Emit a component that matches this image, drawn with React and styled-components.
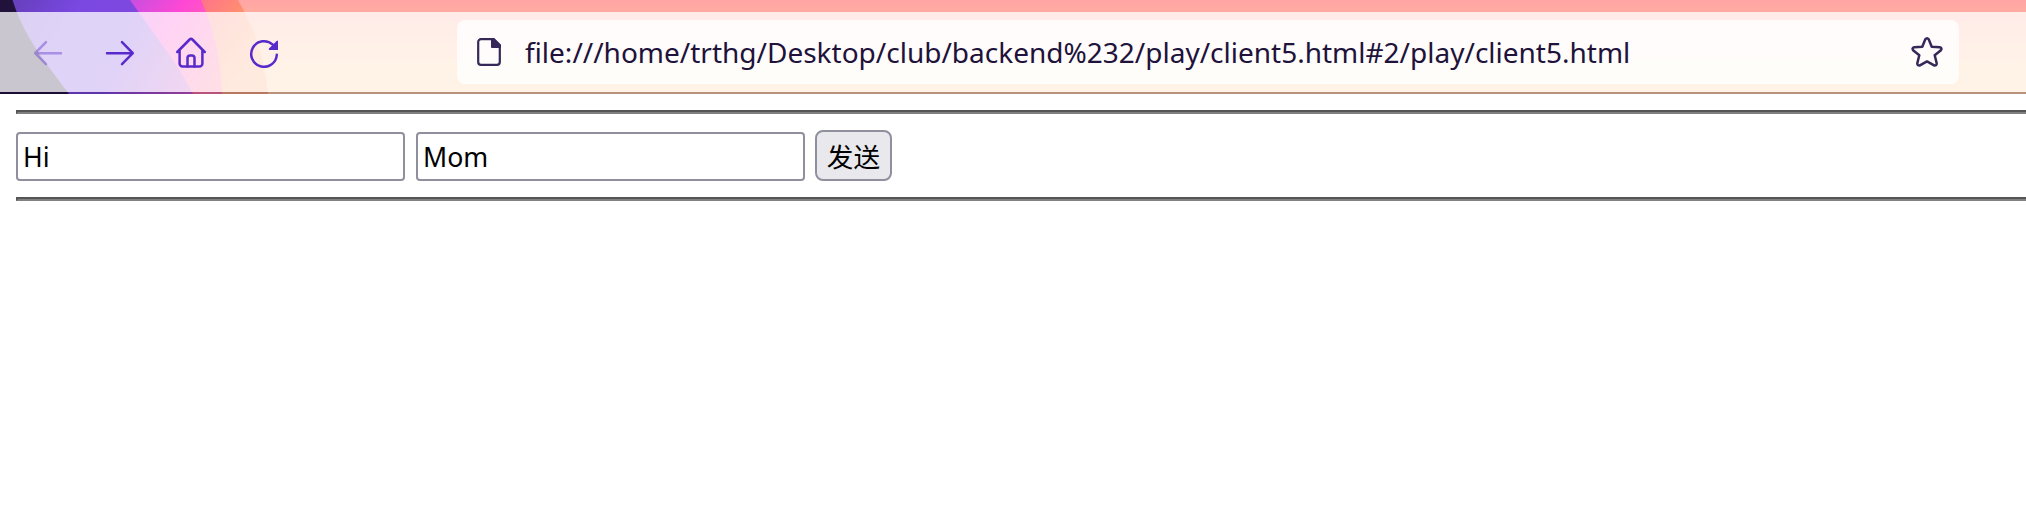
import React from "react";
import styled, { createGlobalStyle } from "styled-components";

const GlobalStyle = createGlobalStyle`
  * { box-sizing: border-box; }
  body { margin: 0; background: #fff; overflow: hidden; font-family: "Noto Sans", "Noto Sans CJK SC", sans-serif; }
`;

const Chrome = styled.header`
  position: relative;
  height: 94px;
  padding-top: 12px;
  overflow: hidden;
  background: linear-gradient(#ffa5a5 0, #ffaba0 12px, #ffcb9c 66px, #ffcf9c 94px);
`;

const ThemeArt = styled.svg`
  position: absolute;
  top: 0;
  left: 0;
`;

const Toolbar = styled.div`
  position: relative;
  display: flex;
  align-items: center;
  height: 82px;
  background: rgba(255, 255, 255, 0.76);
  background-clip: padding-box;
  border-bottom: 2px solid rgba(21, 8, 45, 0.3);
`;

const NavButtons = styled.nav`
  display: flex;
  gap: 40px;
  padding-left: 32px;
`;

const NavButton = styled.button`
  display: flex;
  width: 32px;
  height: 32px;
  padding: 0;
  border: 0;
  background: none;
  color: #592acb;
  opacity: ${(p) => (p.$dim ? 0.4 : 1)};
`;

const AddressBar = styled.div`
  display: flex;
  align-items: center;
  width: 1502px;
  height: 64px;
  margin-left: 177px;
  padding: 0 16px;
  border-radius: 8px;
  background: rgba(255, 255, 255, 0.8);
  color: #362959;
`;

const Address = styled.span`
  flex: 1;
  margin-left: 20px;
  color: #20123a;
  font-size: 28px;
  line-height: 40px;
  white-space: nowrap;
`;

const Icon = styled.svg`
  display: block;
  flex: none;
  width: 32px;
  height: 32px;
  fill: none;
  stroke: currentColor;
  stroke-width: 2.5;
  stroke-linecap: round;
  stroke-linejoin: round;
`;

const Page = styled.main`
  padding: 16px 0 0 16px;
`;

const Rule = styled.hr`
  height: 4px;
  margin: 0;
  border: 2px solid;
  border-color: #555 #808080 #808080 #555;
  border-right: 0;
`;

const Form = styled.form`
  display: flex;
  align-items: flex-end;
  height: 83px;
  padding-bottom: 16px;
`;

const TextField = styled.input`
  width: 389px;
  height: 49px;
  margin-right: ${(p) => p.$gap}px;
  padding: 0 8px 0 5px;
  border: 2px solid #8f8f9d;
  border-radius: 4px;
  background: #fff;
  color: #000;
  font: 26.667px "Noto Sans", sans-serif;
  outline: 0;
`;

const SendButton = styled.button`
  width: 77px;
  height: 51px;
  padding: 0;
  border: 2px solid #8f8f9d;
  border-radius: 8px;
  background: #e9e9ed;
  color: #000;
  font: 26.667px "Noto Sans CJK SC", sans-serif;
`;

export default function App() {
  return (
    <>
      <GlobalStyle />
      <Chrome>
        <ThemeArt width="280" height="94" aria-hidden="true">
          <defs>
            <linearGradient id="violet" gradientUnits="userSpaceOnUse" x1="20" y1="0" x2="190" y2="94">
              <stop offset="0" stopColor="#6840c0" />
              <stop offset="0.28" stopColor="#7a48e2" />
              <stop offset="0.6" stopColor="#8048de" />
              <stop offset="1" stopColor="#c856c4" />
            </linearGradient>
            <linearGradient id="magenta" gradientUnits="userSpaceOnUse" x1="130" y1="0" x2="222" y2="70">
              <stop offset="0" stopColor="#c84ee0" />
              <stop offset="0.4" stopColor="#ff48d4" />
              <stop offset="1" stopColor="#ff769a" />
            </linearGradient>
            <linearGradient id="coral" gradientUnits="userSpaceOnUse" x1="201" y1="0" x2="262" y2="50">
              <stop offset="0" stopColor="#ff7388" />
              <stop offset="0.5" stopColor="#ff9070" />
              <stop offset="1" stopColor="#ffa878" />
            </linearGradient>
          </defs>
          <path d="M0 0H238C254 28 265 57 268 94H0Z" fill="url(#coral)" />
          <path d="M0 0H201C214 28 221 62 222 94H0Z" fill="url(#magenta)" />
          <path d="M0 0H130L170 56Q184 76 193 94H0Z" fill="url(#violet)" />
          <path d="M0 0H12.5C24 36 42 58 69 94H0Z" fill="#20123a" />
        </ThemeArt>
        <Toolbar>
          <NavButtons>
            <NavButton $dim aria-label="Back">
              <Icon viewBox="0 0 32 32"><path d="M29 17.2H3.2M14 6.2l-10.8 11 10.8 11" /></Icon>
            </NavButton>
            <NavButton aria-label="Forward">
              <Icon viewBox="0 0 32 32"><path d="M3 17.2h25.8M18 6.2l10.8 11-10.8 11" /></Icon>
            </NavButton>
            <NavButton aria-label="Home">
              <Icon viewBox="0 0 32 32">
                <path d="M1.3 16L13.6 3.5a2 2 0 0 1 2.8 0L28.7 16M3.6 14v13.4a3 3 0 0 0 3 3h16.8a3 3 0 0 0 3-3V14" />
                <path d="M11.5 30.4v-8.4a2.6 2.6 0 0 1 2.6-2.6h1.8a2.6 2.6 0 0 1 2.6 2.6v8.4" />
              </Icon>
            </NavButton>
            <NavButton aria-label="Reload">
              <Icon viewBox="0 0 32 32">
                <path d="M28.8 18.7A12.8 12.8 0 1 1 24.8 8.7" />
                <path d="M30 5.3v8.7h-8.4a.9.9 0 0 1-.6-1.5l7.6-7.6q1.2-.9 1.4.4z" fill="currentColor" stroke="none" />
              </Icon>
            </NavButton>
          </NavButtons>
          <AddressBar>
            <Icon viewBox="0 0 32 32">
              <path d="M20.5 3.2H8a2.8 2.8 0 0 0-2.8 2.8v20A2.8 2.8 0 0 0 8 28.8h16a2.8 2.8 0 0 0 2.8-2.8V9.5z" strokeWidth="2.2" />
              <path d="M18 2h3.2L28 8.8V12H19a1 1 0 0 1-1-1z" fill="currentColor" stroke="none" />
            </Icon>
            <Address>file:///home/trthg/Desktop/club/backend%232/play/client5.html#2/play/client5.html</Address>
            <Icon viewBox="0 0 32 32">
              <path d="M14.3 3.3q1.7-2.2 3.4 0l3 7.4 8.1.6q2.6.7 1.1 2.9l-6.2 5.1 2 8q0 2.6-2.6 2.1L16 25.4l-7.1 4q-2.6.5-2.6-2.1l2-8-6.2-5.1q-1.5-2.2 1.1-2.9l8.1-.6z" />
            </Icon>
          </AddressBar>
        </Toolbar>
      </Chrome>
      <Page>
        <Rule />
        <Form onSubmit={(e) => e.preventDefault()}>
          <TextField $gap={11} defaultValue="Hi" />
          <TextField $gap={10} defaultValue="Mom" />
          <SendButton>发送</SendButton>
        </Form>
        <Rule />
      </Page>
    </>
  );
}
